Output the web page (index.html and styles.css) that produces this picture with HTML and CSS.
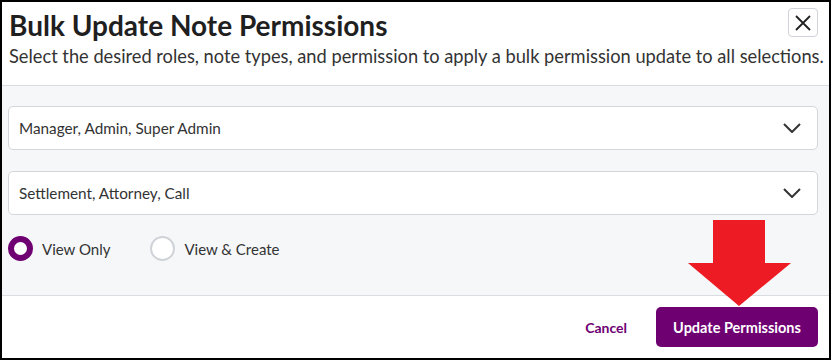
FILE: index.html
```html
<!DOCTYPE html>
<html>
<head>
<meta charset="utf-8">
<link rel="stylesheet" href="styles.css">
</head>
<body>
<div class="modal">
  <div class="modal-header">
    <div class="header-top">
      <h1 class="title">Bulk Update Note Permissions</h1>
      <button class="close-btn" aria-label="Close">
        <svg width="18" height="18" viewBox="0 0 18 18"><path d="M2 2 L16 16 M16 2 L2 16" stroke="#222" stroke-width="1.8" fill="none"/></svg>
      </button>
    </div>
    <p class="subtitle">Select the desired roles, note types, and permission to apply a bulk permission update to all selections.</p>
  </div>
  <div class="modal-body">
    <div class="select">
      <span class="select-text">Manager, Admin, Super Admin</span>
      <svg class="chev" width="18" height="10" viewBox="0 0 18 10"><path d="M1 1 L9 9 L17 1" stroke="#333" stroke-width="2" fill="none"/></svg>
    </div>
    <div class="select">
      <span class="select-text">Settlement, Attorney, Call</span>
      <svg class="chev" width="18" height="10" viewBox="0 0 18 10"><path d="M1 1 L9 9 L17 1" stroke="#333" stroke-width="2" fill="none"/></svg>
    </div>
    <div class="radios">
      <label class="radio"><span class="dot checked"></span><span class="radio-label">View Only</span></label>
      <label class="radio"><span class="dot"></span><span class="radio-label">View &amp; Create</span></label>
    </div>
  </div>
  <div class="modal-footer">
    <button class="cancel">Cancel</button>
    <button class="primary">Update Permissions</button>
    <svg class="arrow" width="104" height="87" viewBox="0 0 104 87"><polygon points="25,0 77,0 77,43 103,43 51,86 0,43 25,43" fill="#ed1c24"/></svg>
  </div>
</div>
</body>
</html>
```
FILE: styles.css
```css
* { box-sizing: border-box; }
html, body { margin: 0; padding: 0; }
body {
  font-family: Lato, "Noto Sans", sans-serif;
  color: #212529;
  background: #fff;
}
.modal {
  width: 831px;
  height: 360px;
  border: 2px solid #000;
  display: flex;
  flex-direction: column;
  position: relative;
}
.modal-header {
  height: 84px;
  padding: 6px 11px 0 7px;
  border-bottom: 1px solid #d9dce0;
  background: #fff;
}
.header-top {
  display: flex;
  justify-content: space-between;
  align-items: flex-start;
}
.title {
  margin: 0;
  font-size: 28px;
  font-weight: 700;
  line-height: 34px;
  color: #1f1f1f;
}
.close-btn {
  width: 30px;
  height: 29px;
  margin-top: 0;
  border: 1px solid #d0d3d7;
  border-radius: 4px;
  background: #fff;
  display: flex;
  align-items: center;
  justify-content: center;
  padding: 0;
}
.subtitle {
  margin: 2px 0 0 0;
  font-size: 18.25px;
  line-height: 24px;
  color: #333;
  white-space: nowrap;
}
.modal-body {
  flex: 1;
  background: #f6f7f9;
  padding: 20px 11px 0 6px;
  border-bottom: 1px solid #d9dce0;
}
.select {
  height: 44px;
  background: #fff;
  border: 1px solid #d3d6da;
  border-radius: 5px;
  display: flex;
  align-items: center;
  justify-content: space-between;
  padding: 0 16px 0 10px;
  margin-bottom: 21px;
}
.select-text {
  font-size: 15.3px;
  color: #333;
}
.chev { display: block; }
.radios {
  display: flex;
  align-items: center;
  gap: 40px;
  margin-top: 0;
}
.radio {
  display: flex;
  align-items: center;
  gap: 9px;
}
.dot {
  width: 25px;
  height: 25px;
  border-radius: 50%;
  border: 2px solid #cfd3d8;
  background: #fff;
}
.dot.checked {
  border: 6px solid #6e0072;
}
.radio-label {
  font-size: 15px;
  color: #333;
}
.modal-footer {
  flex: 1 0 62px;
  max-height: 62px;
  display: flex;
  align-items: center;
  justify-content: flex-end;
  padding-right: 11px;
  background: #fff;
  position: relative;
}
.cancel {
  background: none;
  border: none;
  color: #6e0072;
  font-family: inherit;
  font-weight: 700;
  font-size: 14px;
  margin-right: 23px;
}
.primary {
  width: 162px;
  height: 40px;
  background: #6e0072;
  border: none;
  border-radius: 5px;
  color: #fff;
  font-family: inherit;
  font-weight: 700;
  font-size: 14.5px;
}
.arrow {
  position: absolute;
  left: 686px;
  top: -76px;
}
```
